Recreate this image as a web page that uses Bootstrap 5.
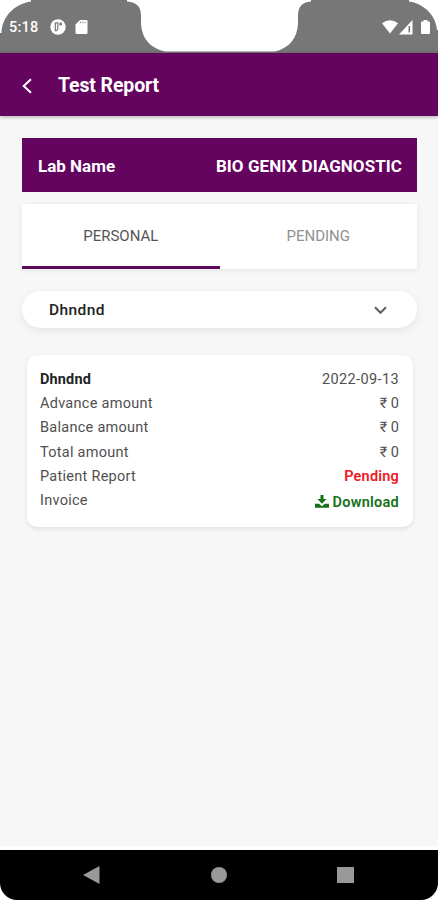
<!DOCTYPE html>
<html lang="en">
<head>
<meta charset="utf-8">
<meta name="viewport" content="width=device-width, initial-scale=1">
<title>Test Report</title>
<link href="https://cdn.jsdelivr.net/npm/bootstrap@5.3.0/dist/css/bootstrap.min.css" rel="stylesheet">
<style>
  body { font-family: Roboto, "Noto Sans", sans-serif; background: #fff; color: #444; line-height: 1; }
  .phone { height: 900px; overflow: hidden; }
  .status-bar { height: 53px; color: #fff; }
  .status-shape { position: absolute; inset: 0; }
  .status-content { position: relative; height: 100%; padding: 1px 8px 0 9px; }
  .clock { font-size: 14.5px; font-weight: 500; letter-spacing: .25px; width: 41px; padding-top: 2px; }
  .app-bar { height: 63px; background: #64045f; padding: 3px 21px 0; box-shadow: 0 1px 4px rgba(0,0,0,.3); position: relative; }
  .app-title { font-size: 19.5px; font-weight: 700; margin: 0 0 0 25px; letter-spacing: -.13px; }
  .screen { background: #f7f7f7; height: 730px; padding: 22px 21px 0 22px; }
  .lab { height: 54px; background: #64045f; color: #fff; padding: 3px 15px 0 16px; font-weight: 700; font-size: 17px; }
  .lab-value { letter-spacing: .06px; }
  .tabs { height: 65px; margin-top: 12px; background: #fff; box-shadow: 0 1px 6px rgba(0,0,0,.08); font-size: 15px; }
  .tabs .nav-link { height: 65px; border-radius: 0; color: #909090; padding: 3px 0 0; border-bottom: 3px solid transparent; }
  .tabs .nav-link.active { color: #555; border-bottom-color: #5c0a58; }
  .picker { height: 37px; margin-top: 22px; padding: 2px 30px 0 27px; border: 0; background: #fff; box-shadow: 0 3px 9px rgba(0,0,0,.08); font-size: 15.5px; font-weight: 500; letter-spacing: .4px; color: #222; }
  .picker span { padding-top: 1px; }
  .report { margin: 27px 4px 0 5px; height: 172px; border: 0; border-radius: 10px; box-shadow: 0 2px 5px rgba(0,0,0,.09); padding: 13px 14px 0 13px; font-size: 14.5px; --bs-card-bg: #fff; color: #505050; }
  .report-row { height: 24.3px; }
  .label-text { letter-spacing: .27px; }
  .patient { letter-spacing: .15px; }
  .date { letter-spacing: .38px; }
  .pending { color: #ee1822; letter-spacing: .2px; }
  .download { color: #177018; text-decoration: none; padding-top: 4px; letter-spacing: .25px; }
  .nav-keys { height: 50px; margin-top: 4px; background: #000; border-radius: 0 0 17px 17px; padding: 0 84px 0 83px; }
</style>
</head>
<body>
<div class="phone">
  <header class="status-bar position-relative">
    <svg class="status-shape" width="438" height="53" viewBox="0 0 438 53" aria-hidden="true">
      <path fill="#777" d="M0 53V33H1.5C2 17 14 4 31 1.5V0H127V1.5C137 2 141 7 141 16V24C142 39 150 48 165 51.5H275C289 48 297 39 298 24V16C298 7 302 2 311 1.5V0H409V1.5C425 4 436 16 437 30h1V53Z"/>
    </svg>
    <div class="status-content d-flex align-items-center">
      <span class="clock">5:18</span>
      <svg width="16" height="16" viewBox="0 0 16 16" aria-hidden="true"><circle cx="8" cy="8" r="7.7" fill="#fff"/><path d="M5.3 3.5V12M5.3 3.9H7.8V8.5C7.8 10.5 7 12 5.3 12" fill="none" stroke="#777" stroke-width="1.2"/><path d="M9.4 3.6H12V6.4H9.4Z" fill="#777"/></svg>
      <svg class="ms-2" width="14" height="16" viewBox="0 0 14 16" aria-hidden="true"><path d="M6 1H12.5Q13.5 1 13.5 2.2V13.7Q13.5 15 12.5 15H3Q1.5 15 1.5 13.7V5.5Z" fill="#fff"/><path d="M6.5 2.5V4.2M8.8 2.5V4.2M11 2.5V4.2" stroke="#777" stroke-width=".8"/></svg>
      <svg class="ms-auto" width="16" height="14" viewBox="0 0 16 14" aria-hidden="true"><path d="M0 3.2Q8-2.8 16 3.2L8 13.5Z" fill="#fff"/></svg>
      <svg width="15" height="15" viewBox="0 0 15 15" aria-hidden="true"><path d="M1 14.5L14.5 0V14.5Z" fill="#fff"/><path d="M11.3 6V12.5" stroke="#777" stroke-width="1.6"/></svg>
      <svg style="" class="ms-1 ps-1" width="13" height="14" viewBox="0 0 9 14" aria-hidden="true"><path d="M2.5 0H6.5V1.5H8Q9 1.5 9 2.5V13Q9 14 8 14H1Q0 14 0 13V2.5Q0 1.5 1 1.5H2.5Z" fill="#fff"/></svg>
    </div>
  </header>
  <nav class="app-bar d-flex align-items-center text-white">
    <svg width="12" height="16" viewBox="0 0 12 16" fill="none" stroke="#fff" stroke-width="2" role="img" aria-label="Back"><path d="M10 1.2L2.7 8L10 14.8"/></svg>
    <h1 class="app-title">Test Report</h1>
  </nav>
  <main class="screen">
    <div class="lab d-flex justify-content-between align-items-center"><span>Lab Name</span><span class="lab-value">BIO GENIX DIAGNOSTIC</span></div>
    <div class="tabs nav nav-fill flex-nowrap">
      <a class="nav-link active w-50 d-flex align-items-center justify-content-center" href="#">PERSONAL</a>
      <a class="nav-link w-50 d-flex align-items-center justify-content-center" href="#">PENDING</a>
    </div>
    <button class="picker w-100 rounded-pill d-flex align-items-center justify-content-between" type="button"><span>Dhndnd</span>
      <svg width="13" height="9" viewBox="0 0 13 9" fill="none" stroke="#606060" stroke-width="2" aria-hidden="true"><path d="M1 1.2L6.5 6.8L12 1.2"/></svg>
    </button>
    <section class="report card">
      <div class="report-row d-flex align-items-center justify-content-between"><span class="fw-bold text-dark patient">Dhndnd</span><span class="date">2022-09-13</span></div>
      <div class="report-row d-flex align-items-center justify-content-between"><span class="label-text">Advance amount</span><span>₹ 0</span></div>
      <div class="report-row d-flex align-items-center justify-content-between"><span class="label-text">Balance amount</span><span>₹ 0</span></div>
      <div class="report-row d-flex align-items-center justify-content-between"><span class="label-text">Total amount</span><span>₹ 0</span></div>
      <div class="report-row d-flex align-items-center justify-content-between"><span class="label-text">Patient Report</span><span class="pending fw-semibold">Pending</span></div>
      <div class="report-row d-flex align-items-center justify-content-between"><span class="label-text">Invoice</span>
        <a class="download fw-semibold d-flex align-items-center gap-1" href="#"><svg class="mb-1" width="14" height="13" viewBox="0 0 14 13" fill="#177018" aria-hidden="true"><path d="M5.5 0H8.5V4H11.5L7 8.7L2.5 4H5.5ZM0 8.8H4.1L7 11.2L9.9 8.8H14V12.8H0Z"/></svg><span>Download</span></a></div>
    </section>
  </main>
  <footer class="nav-keys d-flex align-items-center justify-content-between">
    <svg width="17" height="18" viewBox="0 0 17 18" aria-hidden="true"><path d="M0 9L16.5 0V18Z" fill="#999"/></svg>
    <svg width="16" height="16" viewBox="0 0 16 16" aria-hidden="true"><circle cx="8" cy="8" r="8" fill="#999"/></svg>
    <svg width="17" height="16" viewBox="0 0 17 16" aria-hidden="true"><path d="M0 0H17V16H0Z" fill="#999"/></svg>
  </footer>
</div>
<script src="https://cdn.jsdelivr.net/npm/bootstrap@5.3.0/dist/js/bootstrap.bundle.min.js"></script>
</body>
</html>
